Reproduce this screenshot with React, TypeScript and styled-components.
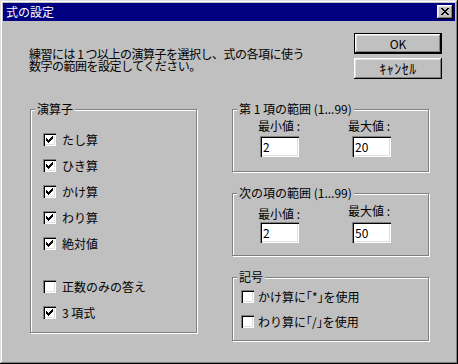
import React from 'react';
import styled, { createGlobalStyle } from 'styled-components';

const GlobalStyle = createGlobalStyle`
  html, body {
    margin: 0;
    padding: 0;
    background: #c0c0c0;
  }
  body {
    font-family: "Noto Sans CJK JP", "Liberation Sans", sans-serif;
    font-size: 12px;
    color: #000;
  }
`;

const Window = styled.div`
  width: 458px;
  height: 364px;
  box-sizing: border-box;
  padding: 3px;
  background: #c0c0c0;
  box-shadow: inset -1px -1px #000, inset 1px 1px #dfdfdf, inset -2px -2px #808080,
    inset 2px 2px #fff;
  display: flex;
  flex-direction: column;
`;

const TitleBar = styled.div`
  height: 18px;
  background: #000080;
  display: flex;
  align-items: center;
  justify-content: space-between;
  padding: 0 2px 0 3px;
`;

const Title = styled.span`
  color: #fff;
  line-height: 12px;
`;

const CloseButton = styled.div`
  width: 16px;
  height: 14px;
  box-sizing: border-box;
  background: #c0c0c0;
  box-shadow: inset -1px -1px #000, inset 1px 1px #fff, inset -2px -2px #808080,
    inset 2px 2px #dfdfdf;
  display: flex;
  align-items: center;
  justify-content: center;
  padding-bottom: 1px;
`;

const Content = styled.div`
  flex: 1;
  padding: 12px 13px 0 27px;
`;

const TopRow = styled.div`
  display: flex;
  justify-content: space-between;
  align-items: flex-start;
`;

const Description = styled.p`
  margin: 15px 0 0 -1px;
  line-height: 12px;
  letter-spacing: -0.5px;
`;

const ButtonColumn = styled.div`
  display: flex;
  flex-direction: column;
  gap: 4px;
`;

const Button = styled.button<{ $default?: boolean }>`
  width: 88px;
  height: 21px;
  box-sizing: border-box;
  margin: 0;
  padding: 0;
  font: inherit;
  font-size: 12px;
  line-height: 12px;
  color: #000;
  background: #c0c0c0;
  border: ${(p) => (p.$default ? '1px solid #000' : 'none')};
  box-shadow: inset -1px -1px #000, inset 1px 1px #fff, inset -2px -2px #808080,
    inset 2px 2px #dfdfdf;
  outline: none;
`;

const Kana = styled.span`
  font-size: 14px;
  letter-spacing: 0.5px;
`;

const MainRow = styled.div`
  display: flex;
  align-items: flex-start;
  gap: 35px;
  margin-top: 30px;
`;

const Group = styled.div<{ $w: number; $h: number }>`
  width: ${(p) => p.$w}px;
  height: ${(p) => p.$h}px;
  box-sizing: border-box;
  border: 1px solid #808080;
  box-shadow: inset 1px 1px #fff, 1px 1px #fff;
`;

const Legend = styled.div`
  width: fit-content;
  margin: -7px 0 0 4px;
  padding: 0 2px;
  line-height: 12px;
  background: #c0c0c0;
`;

const RightColumn = styled.div`
  display: flex;
  flex-direction: column;
  gap: 21px;
`;

const CheckList = styled.div<{ $pt: number; $pl: number; $gap: number }>`
  display: flex;
  flex-direction: column;
  gap: ${(p) => p.$gap}px;
  padding: ${(p) => p.$pt}px 0 0 ${(p) => p.$pl}px;
`;

const CheckRow = styled.label<{ $gap: number; $space?: number }>`
  display: flex;
  align-items: center;
  gap: ${(p) => p.$gap}px;
  height: 13px;
  line-height: 13px;
  margin-top: ${(p) => p.$space ?? 0}px;
`;

const Box = styled.span`
  width: 13px;
  height: 13px;
  box-sizing: border-box;
  flex: none;
  background: #fff;
  box-shadow: inset 1px 1px #808080, inset 2px 2px #000, inset -1px -1px #fff,
    inset -2px -2px #dfdfdf;
  display: flex;
  padding: 3px 0 0 3px;
`;

const FieldRow = styled.div`
  display: flex;
  padding-left: 25px;
`;

const Field = styled.div<{ $w: number; $inputLeft: number }>`
  width: ${(p) => p.$w}px;
  display: flex;
  flex-direction: column;
  align-items: flex-start;
  input {
    margin-left: ${(p) => p.$inputLeft}px;
  }
`;

const FieldLabel = styled.span<{ $top: number }>`
  line-height: 12px;
  margin-top: ${(p) => p.$top}px;
`;

const NumberInput = styled.input<{ $top: number }>`
  width: 39px;
  height: 21px;
  box-sizing: border-box;
  margin-top: ${(p) => p.$top}px;
  padding: 0 0 0 3px;
  border: none;
  outline: none;
  background: #fff;
  font: inherit;
  font-size: 12px;
  color: #000;
  box-shadow: inset 1px 1px #808080, inset 2px 2px #000, inset -1px -1px #fff,
    inset -2px -2px #dfdfdf;
`;

const CloseGlyph = () => (
  <svg width="8" height="7" viewBox="0 0 8 7" shapeRendering="crispEdges">
    <path
      fill="#000"
      d="M0 0h2v1H0zM6 0h2v1H6zM1 1h2v1H1zM5 1h2v1H5zM2 2h4v1H2zM3 3h2v1H3zM2 4h4v1H2zM1 5h2v1H1zM5 5h2v1H5zM0 6h2v1H0zM6 6h2v1H6z"
    />
  </svg>
);

const CheckGlyph = () => (
  <svg width="7" height="7" viewBox="0 0 7 7" shapeRendering="crispEdges">
    <path
      fill="#000"
      d="M0 2h1v3H0zM1 3h1v3H1zM2 4h1v3H2zM3 3h1v3H3zM4 2h1v3H4zM5 1h1v3H5zM6 0h1v3H6z"
    />
  </svg>
);

const Checkbox = ({ checked }: { checked?: boolean }) => <Box>{checked && <CheckGlyph />}</Box>;

const operators = [
  { label: 'たし算', checked: true },
  { label: 'ひき算', checked: true },
  { label: 'かけ算', checked: true },
  { label: 'わり算', checked: true },
  { label: '絶対値', checked: true },
  { label: '正数のみの答え', checked: false, space: 17 },
  { label: '3 項式', checked: true },
];

const ranges = [
  { title: '第 1 項の範囲 (1...99)', min: '2', max: '20', h: 63, lt: [5, 5], it: [4, 4] },
  { title: '次の項の範囲 (1...99)', min: '2', max: '50', h: 63, lt: [9, 6], it: [2, 5] },
];

export default function App() {
  return (
    <>
      <GlobalStyle />
      <Window>
        <TitleBar>
          <Title>式の設定</Title>
          <CloseButton>
            <CloseGlyph />
          </CloseButton>
        </TitleBar>
        <Content>
          <TopRow>
            <Description>
              練習には 1 つ以上の演算子を選択し、式の各項に使う
              <br />
              数字の範囲を設定してください。
            </Description>
            <ButtonColumn>
              <Button $default>OK</Button>
              <Button>
                <Kana>ｷｬﾝｾﾙ</Kana>
              </Button>
            </ButtonColumn>
          </TopRow>
          <MainRow>
            <Group $w={167} $h={224}>
              <Legend>演算子</Legend>
              <CheckList $pt={18} $pl={12} $gap={13}>
                {operators.map((op) => (
                  <CheckRow key={op.label} $gap={6} $space={op.space}>
                    <Checkbox checked={op.checked} />
                    {op.label}
                  </CheckRow>
                ))}
              </CheckList>
            </Group>
            <RightColumn>
              {ranges.map((r) => (
                <Group key={r.title} $w={197} $h={r.h}>
                  <Legend>{r.title}</Legend>
                  <FieldRow>
                    <Field $w={90} $inputLeft={2}>
                      <FieldLabel $top={r.lt[0]}>最小値 :</FieldLabel>
                      <NumberInput $top={r.it[0]} defaultValue={r.min} />
                    </Field>
                    <Field $w={60} $inputLeft={4}>
                      <FieldLabel $top={r.lt[1]}>最大値 :</FieldLabel>
                      <NumberInput $top={r.it[1]} defaultValue={r.max} />
                    </Field>
                  </FieldRow>
                </Group>
              ))}
              <Group $w={197} $h={64}>
                <Legend>記号</Legend>
                <CheckList $pt={7} $pl={8} $gap={12}>
                  <CheckRow $gap={4}>
                    <Checkbox />
                    かけ算に｢*｣を使用
                  </CheckRow>
                  <CheckRow $gap={4}>
                    <Checkbox />
                    わり算に｢/｣を使用
                  </CheckRow>
                </CheckList>
              </Group>
            </RightColumn>
          </MainRow>
        </Content>
      </Window>
    </>
  );
}
